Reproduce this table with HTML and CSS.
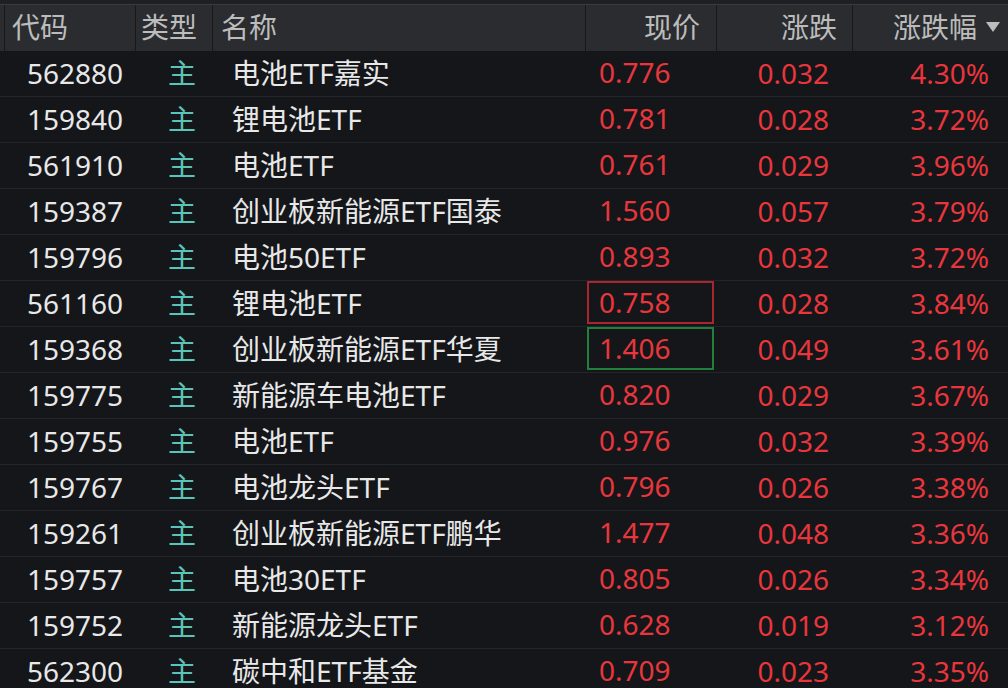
FILE: index.html
```html
<!DOCTYPE html>
<html lang="zh-CN">
<head>
  <meta charset="UTF-8" />
  <meta name="viewport" content="width=device-width, initial-scale=1.0"/>
  <title>ETF 行情</title>
  <link rel="stylesheet" href="styles.css">
</head>
<body>
  <div class="quote-board">
    <div class="top-strip"></div>
    <div class="row head">
      <div class="cell c-pad"></div>
      <div class="cell c-code">代码</div>
      <div class="cell c-type">类型</div>
      <div class="cell c-name">名称</div>
      <div class="cell c-price">现价</div>
      <div class="cell c-chg">涨跌</div>
      <div class="cell c-pct">涨跌幅<span class="sort-arrow"></span></div>
    </div>

    <div class="row">
      <div class="cell c-pad"></div>
      <div class="cell c-code">562880</div>
      <div class="cell c-type">主</div>
      <div class="cell c-name">电池ETF嘉实</div>
      <div class="cell c-price"><span class="price">0.776</span></div>
      <div class="cell c-chg">0.032</div>
      <div class="cell c-pct">4.30%</div>
    </div>
    <div class="row">
      <div class="cell c-pad"></div>
      <div class="cell c-code">159840</div>
      <div class="cell c-type">主</div>
      <div class="cell c-name">锂电池ETF</div>
      <div class="cell c-price"><span class="price">0.781</span></div>
      <div class="cell c-chg">0.028</div>
      <div class="cell c-pct">3.72%</div>
    </div>
    <div class="row">
      <div class="cell c-pad"></div>
      <div class="cell c-code">561910</div>
      <div class="cell c-type">主</div>
      <div class="cell c-name">电池ETF</div>
      <div class="cell c-price"><span class="price">0.761</span></div>
      <div class="cell c-chg">0.029</div>
      <div class="cell c-pct">3.96%</div>
    </div>
    <div class="row">
      <div class="cell c-pad"></div>
      <div class="cell c-code">159387</div>
      <div class="cell c-type">主</div>
      <div class="cell c-name">创业板新能源ETF国泰</div>
      <div class="cell c-price"><span class="price">1.560</span></div>
      <div class="cell c-chg">0.057</div>
      <div class="cell c-pct">3.79%</div>
    </div>
    <div class="row">
      <div class="cell c-pad"></div>
      <div class="cell c-code">159796</div>
      <div class="cell c-type">主</div>
      <div class="cell c-name">电池50ETF</div>
      <div class="cell c-price"><span class="price">0.893</span></div>
      <div class="cell c-chg">0.032</div>
      <div class="cell c-pct">3.72%</div>
    </div>
    <div class="row">
      <div class="cell c-pad"></div>
      <div class="cell c-code">561160</div>
      <div class="cell c-type">主</div>
      <div class="cell c-name">锂电池ETF</div>
      <div class="cell c-price"><span class="price tick-up">0.758</span></div>
      <div class="cell c-chg">0.028</div>
      <div class="cell c-pct">3.84%</div>
    </div>
    <div class="row">
      <div class="cell c-pad"></div>
      <div class="cell c-code">159368</div>
      <div class="cell c-type">主</div>
      <div class="cell c-name">创业板新能源ETF华夏</div>
      <div class="cell c-price"><span class="price tick-down">1.406</span></div>
      <div class="cell c-chg">0.049</div>
      <div class="cell c-pct">3.61%</div>
    </div>
    <div class="row">
      <div class="cell c-pad"></div>
      <div class="cell c-code">159775</div>
      <div class="cell c-type">主</div>
      <div class="cell c-name">新能源车电池ETF</div>
      <div class="cell c-price"><span class="price">0.820</span></div>
      <div class="cell c-chg">0.029</div>
      <div class="cell c-pct">3.67%</div>
    </div>
    <div class="row">
      <div class="cell c-pad"></div>
      <div class="cell c-code">159755</div>
      <div class="cell c-type">主</div>
      <div class="cell c-name">电池ETF</div>
      <div class="cell c-price"><span class="price">0.976</span></div>
      <div class="cell c-chg">0.032</div>
      <div class="cell c-pct">3.39%</div>
    </div>
    <div class="row">
      <div class="cell c-pad"></div>
      <div class="cell c-code">159767</div>
      <div class="cell c-type">主</div>
      <div class="cell c-name">电池龙头ETF</div>
      <div class="cell c-price"><span class="price">0.796</span></div>
      <div class="cell c-chg">0.026</div>
      <div class="cell c-pct">3.38%</div>
    </div>
    <div class="row">
      <div class="cell c-pad"></div>
      <div class="cell c-code">159261</div>
      <div class="cell c-type">主</div>
      <div class="cell c-name">创业板新能源ETF鹏华</div>
      <div class="cell c-price"><span class="price">1.477</span></div>
      <div class="cell c-chg">0.048</div>
      <div class="cell c-pct">3.36%</div>
    </div>
    <div class="row">
      <div class="cell c-pad"></div>
      <div class="cell c-code">159757</div>
      <div class="cell c-type">主</div>
      <div class="cell c-name">电池30ETF</div>
      <div class="cell c-price"><span class="price">0.805</span></div>
      <div class="cell c-chg">0.026</div>
      <div class="cell c-pct">3.34%</div>
    </div>
    <div class="row">
      <div class="cell c-pad"></div>
      <div class="cell c-code">159752</div>
      <div class="cell c-type">主</div>
      <div class="cell c-name">新能源龙头ETF</div>
      <div class="cell c-price"><span class="price">0.628</span></div>
      <div class="cell c-chg">0.019</div>
      <div class="cell c-pct">3.12%</div>
    </div>
    <div class="row">
      <div class="cell c-pad"></div>
      <div class="cell c-code">562300</div>
      <div class="cell c-type">主</div>
      <div class="cell c-name">碳中和ETF基金</div>
      <div class="cell c-price"><span class="price">0.709</span></div>
      <div class="cell c-chg">0.023</div>
      <div class="cell c-pct">3.35%</div>
    </div>
  </div>
</body>
</html>
```

FILE: styles.css
```css
html, body {
  margin: 0;
  padding: 0;
  height: 100%;
  overflow: hidden;
  background: #14161a;
}

body {
  font-family: "Noto Sans", "Noto Sans CJK SC", sans-serif;
  font-size: 28px;
  color: #e8e8e8;
}

.quote-board {
  width: 1008px;
}

.top-strip {
  height: 4px;
  background: #1f2023;
  border-bottom: 1px solid #3a3b3f;
}

.row {
  display: grid;
  grid-template-columns: 5px 131px 77px 373px 131px 136px 155px;
  height: 46px;
  border-bottom: 1px solid #23252a;
  box-sizing: border-box;
}

.cell {
  display: flex;
  align-items: center;
  white-space: nowrap;
  line-height: 1;
  padding-bottom: 2px;
}

/* body */
.c-code { padding-left: 22px; }
.c-type { padding-left: 32px; color: #5bc4b8; }
.c-name { padding-left: 19px; }

.c-price, .c-chg, .c-pct { color: #e8363c; }

.c-price {
  padding-left: 1px;
  padding-right: 3px;
  padding-bottom: 0;
}

.price {
  display: flex;
  align-items: center;
  box-sizing: border-box;
  width: 100%;
  height: 43px;
  margin-top: -2px;
  padding-left: 12px;
  padding-bottom: 2px;
}

.tick-up { box-shadow: inset 0 0 0 2px #a8262e; }
.tick-down { box-shadow: inset 0 0 0 2px #23803c; }

.c-chg { justify-content: flex-end; padding-right: 24px; }
.c-pct { justify-content: flex-end; padding-right: 19px; }

/* header */
.head {
  background: #2b2c30;
  border-bottom: none;
  height: 46px;
}

.head .cell {
  color: #bcbcbc;
  border-right: 1px solid #17181b;
}

.head .cell:last-child {
  border-right: none;
}

.head .c-code { padding-left: 7px; }
.head .c-type { padding-left: 5px; }
.head .c-name { padding-left: 8px; }
.head .c-price { justify-content: flex-end; padding: 0 16px 2px 0; }
.head .c-chg { justify-content: flex-end; padding-right: 15px; }
.head .c-pct { justify-content: flex-end; padding-right: 8px; }

.sort-arrow {
  width: 0;
  height: 0;
  margin-left: 9px;
  border-left: 7px solid transparent;
  border-right: 7px solid transparent;
  border-top: 10px solid #bcbcbc;
}
```
